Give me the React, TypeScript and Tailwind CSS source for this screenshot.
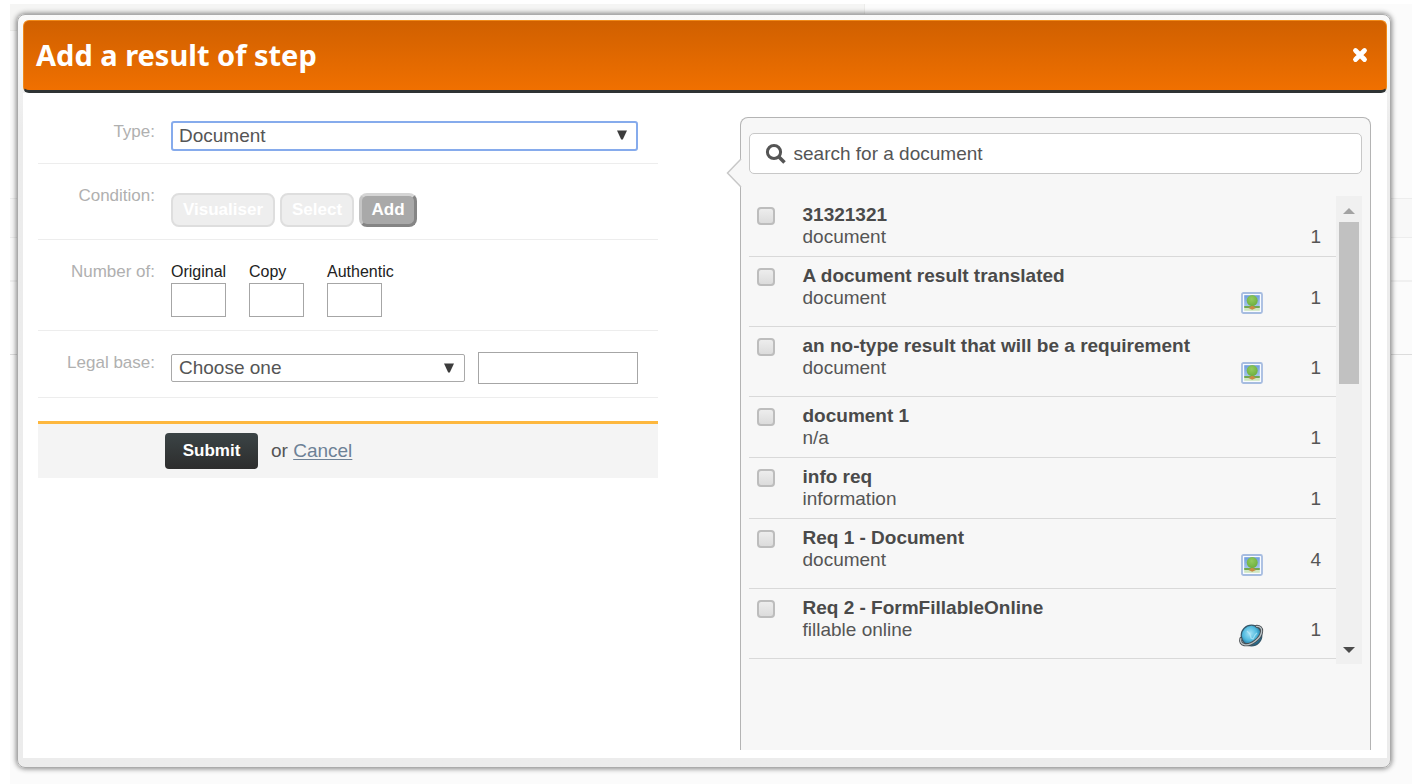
import type { ReactNode } from "react";

type Kind = "image" | "globe" | null;

interface Result {
  title: string;
  type: string;
  count: number;
  kind: Kind;
}

const results: Result[] = [
  { title: "31321321", type: "document", count: 1, kind: null },
  { title: "A document result translated", type: "document", count: 1, kind: "image" },
  { title: "an no-type result that will be a requirement", type: "document", count: 1, kind: "image" },
  { title: "document 1", type: "n/a", count: 1, kind: null },
  { title: "info req", type: "information", count: 1, kind: null },
  { title: "Req 1 - Document", type: "document", count: 4, kind: "image" },
  { title: "Req 2 - FormFillableOnline", type: "fillable online", count: 1, kind: "globe" },
];

function ImageIcon() {
  return (
    <svg width="22" height="22" viewBox="0 0 22 22" aria-hidden="true">
      <defs>
        <linearGradient id="sky" x1="0" y1="0" x2="0" y2="1">
          <stop offset="0" stopColor="#6f9ddd" />
          <stop offset="1" stopColor="#a9c8ee" />
        </linearGradient>
        <radialGradient id="leaf" cx="0.45" cy="0.35" r="0.65">
          <stop offset="0" stopColor="#93cb5f" />
          <stop offset="1" stopColor="#6db03f" />
        </radialGradient>
      </defs>
      <rect x="1" y="1" width="20" height="20" rx="1.5" fill="#f8fbff" stroke="#a6bce0" strokeWidth="1.8" />
      <rect x="3.2" y="3.2" width="15.6" height="12" fill="url(#sky)" />
      <rect x="3.2" y="14" width="15.6" height="2.2" fill="#72a850" />
      <rect x="3.2" y="16.2" width="15.6" height="2.6" fill="#cfe6bf" />
      <path d="M10 12h2.400v2.400l2.600 1.600-3.800 1.800L7.400 16l2.600-1.600z" fill="#c98a45" />
      <circle cx="11.200" cy="8.600" r="5.500" fill="url(#leaf)" />
    </svg>
  );
}

function GlobeIcon() {
  return (
    <svg width="26" height="24" viewBox="0 0 26 24" className="overflow-visible" aria-hidden="true">
      <defs>
        <radialGradient id="sphere" cx="0.42" cy="0.4" r="0.62">
          <stop offset="0" stopColor="#a3e2f6" />
          <stop offset="0.55" stopColor="#4fb9de" />
          <stop offset="1" stopColor="#155f88" />
        </radialGradient>
      </defs>
      <circle cx="12.500" cy="11.500" r="10.300" fill="url(#sphere)" stroke="#35586b" strokeWidth="1.200" />
      <path d="M8 7l3 3 1 4 2 1 2-4 2-2" fill="none" stroke="#c3edf8" strokeWidth="1.200" opacity="0.6" />
      <g transform="rotate(-38 12.500 12)" fill="none" strokeLinecap="round">
        <path d="M22.500 7.500C28 11.500 23 18.300 12.500 18.300S-3 11.500 2.500 7.500" stroke="#474c50" strokeWidth="3" />
        <path d="M22.500 7.500C28 11.500 23 18.300 12.500 18.300S-3 11.500 2.500 7.500" stroke="#b9c3c7" strokeWidth="1.300" />
      </g>
    </svg>
  );
}

function SelectBox({ id, value, className, focused }: { id: string; value: string; className: string; focused?: boolean }) {
  return (
    <div className={`relative ${className}`}>
      <select
        id={id}
        className={
          focused
            ? "block h-[30px] w-full appearance-none rounded-[3px] border-2 border-[#86abec] bg-white pl-[6px] text-[19px] leading-6 text-[#555] outline-none"
            : "block h-7 w-full appearance-none rounded-[2px] border border-[#a9a9a9] bg-white pl-[7px] text-[19px] leading-6 text-[#555] outline-none"
        }
      >
        <option>{value}</option>
      </select>
      <svg className="pointer-events-none absolute top-[9px] right-[11px]" width="10" height="10" viewBox="0 0 10 10" aria-hidden="true">
        <path d="M0 0.500h10L5.800 9.500H4.200z" fill="#3c3c3c" />
      </svg>
    </div>
  );
}

function Row({ label, htmlFor, className, children }: { label: string; htmlFor: string; className: string; children: ReactNode }) {
  return (
    <div className={`flex gap-4 border-b border-[#ededed] pr-5 ${className}`}>
      <label htmlFor={htmlFor} className="w-[117px] shrink-0 text-right text-[17px] leading-[22px] text-[#b0b0b0]">
        {label}
      </label>
      {children}
    </div>
  );
}

function CountField({ id, label }: { id: string; label: string }) {
  return (
    <div className="w-[78px]">
      <label htmlFor={id} className="block">
        {label}
      </label>
      <input id={id} type="text" className="block h-[34px] w-[55px] border border-[#a6a6a6] bg-white px-1 outline-none" />
    </div>
  );
}

function Backdrop() {
  return (
    <div className="absolute inset-0 flex flex-col bg-[#fbfbfb]" aria-hidden="true">
      <div className="h-[27px] w-[61%] border-r border-b border-[#ececea] bg-[#f5f5f4]" />
      <div className="h-[167px]" />
      <div className="h-[40px] border-y border-[#ededed] bg-[#f8f8f8]" />
      <div className="h-[44px] border-b-2 border-[#f0f0f0]" />
      <div className="h-[73px] border-b border-[#dcdcdc]" />
    </div>
  );
}

export default function App() {
  return (
    <div className="min-h-screen bg-white pt-1 pr-[2px] pl-[10px] font-['Liberation_Sans',Arial,sans-serif] text-[#555]">
      <div className="relative min-h-[780px] pt-[10px] pr-[21px] pb-4 pl-[7px]">
        <Backdrop />
        <section
          role="dialog"
          aria-labelledby="dialog-title"
          className="relative rounded-lg border border-[#ababab] bg-linear-to-b from-[#fafafa] to-[#ececec] to-15% pt-[5px] pr-[3px] pb-[9px] pl-[5px] shadow-[0_0_5px_1px_rgba(0,0,0,0.45)]"
        >
          <header className="flex h-[73px] items-center justify-between rounded-md border border-b-3 border-[#f08a1a] border-b-[#2e3334] bg-linear-to-b from-[#d06000] to-[#f07000] pr-[18px] pb-[2px] pl-3">
            <h1 id="dialog-title" className="font-['Noto_Sans','Trebuchet_MS',sans-serif] text-[29px] leading-9 font-bold text-white">
              Add a result of step
            </h1>
            <button type="button" aria-label="Close" className="flex">
              <svg width="16" height="16" viewBox="0 0 16 16" aria-hidden="true">
                <path d="M3.500 3.500l9 9M12.500 3.500l-9 9" stroke="#fff" strokeWidth="4.800" strokeLinecap="round" />
              </svg>
            </button>
          </header>

          <div className="grid grid-cols-[620fr_632fr] gap-[82px] bg-white pt-6 pr-4 pb-2 pl-[15px]">
            <form className="min-w-0 pt-1">
              <Row label="Type:" htmlFor="type" className="pb-3">
                <SelectBox id="type" value="Document" className="flex-1" focused />
              </Row>

              <Row label="Condition:" htmlFor="condition-add" className="pt-[21px] pb-3">
                <div className="mt-2 flex h-[34px] gap-[5px] text-[17px] leading-5 font-bold text-white">
                  <button type="button" disabled className="w-[104px] rounded-lg border-2 border-[#dedede] bg-[#eeeeee]">
                    Visualiser
                  </button>
                  <button type="button" disabled className="w-[74px] rounded-lg border-2 border-[#dedede] bg-[#eeeeee]">
                    Select
                  </button>
                  <button
                    type="button"
                    id="condition-add"
                    className="w-[58px] rounded-lg border-3 border-t-[#d5d5d5] border-r-[#858585] border-b-[#858585] border-l-[#c5c5c5] bg-[#a9a9a9]"
                  >
                    Add
                  </button>
                </div>
              </Row>

              <Row label="Number of:" htmlFor="original" className="pt-[21px] pb-[13px]">
                <div className="flex text-[16px] leading-[22px] text-[#222]">
                  <CountField id="original" label="Original" />
                  <CountField id="copy" label="Copy" />
                  <CountField id="authentic" label="Authentic" />
                </div>
              </Row>

              <Row label="Legal base:" htmlFor="legal-base" className="pt-[21px] pb-[13px]">
                <div className="grid min-w-0 flex-1 grid-cols-[296fr_160fr] items-center gap-[13px]">
                  <SelectBox id="legal-base" value="Choose one" className="min-w-0" />
                  <input
                    type="text"
                    aria-label="Legal base reference"
                    className="h-8 w-full min-w-0 border border-[#a6a6a6] bg-white px-2 outline-none"
                  />
                </div>
              </Row>

              <div className="mt-[23px] flex items-center border-t-3 border-[#fdb73e] bg-[#f4f4f4] py-[9px] pl-[127px] text-[19px] leading-6">
                <button
                  type="submit"
                  className="h-9 w-[93px] rounded-[4px] bg-linear-to-b from-[#3b4446] to-[#2d2d2d] text-[17px] font-bold text-white"
                >
                  Submit
                </button>
                <p className="ml-[13px]">
                  or{" "}
                  <a href="#cancel" className="text-[#6d8196] underline underline-offset-2">
                    Cancel
                  </a>
                </p>
              </div>
            </form>

            <aside className="relative min-h-[633px] min-w-0 rounded-t-lg border border-b-0 border-[#b4b4b4] bg-[#f7f7f7] px-2 pt-[15px]">
              <svg className="absolute top-10 -left-[15px]" width="18" height="30" viewBox="0 0 18 30" aria-hidden="true">
                <path d="M15 1L1.500 15 15 29h3V1z" fill="#f7f7f7" />
                <path d="M15 1L1.500 15 15 29" fill="none" stroke="#c8c8c8" strokeWidth="1.500" />
              </svg>

              <div className="flex h-[41px] items-center rounded-[5px] border border-[#c8c8c8] bg-white pl-[15px]">
                <svg width="22" height="22" viewBox="0 0 22 22" aria-hidden="true">
                  <circle cx="9" cy="9" r="6.600" fill="none" stroke="#555" strokeWidth="3" />
                  <path d="M13.500 13.500L19.500 19.500" stroke="#555" strokeWidth="3.600" />
                </svg>
                <input
                  type="text"
                  aria-label="Search for a document"
                  placeholder="search for a document"
                  className="ml-[7px] min-w-0 flex-1 bg-transparent text-[19px] leading-6 outline-none placeholder:text-[#555]"
                />
              </div>

              <div className="mt-[22px] flex h-[468px]">
                <ul className="min-w-0 flex-1 text-[19px] leading-[22px]">
                  {results.map((item, index) => (
                    <li
                      key={item.title}
                      className={
                        item.kind
                          ? "flex h-[70px] items-start border-b border-[#d9d9d9] pt-2 pr-[15px] pl-2"
                          : "flex h-[61px] items-start border-b border-[#d9d9d9] pt-2 pr-[15px] pl-2"
                      }
                    >
                      <input
                        id={`result-${index}`}
                        type="checkbox"
                        className="mt-[3px] size-[18px] shrink-0 appearance-none rounded-[4px] border-2 border-[#bdbdbd] bg-linear-to-b from-[#ededed] to-[#dcdcdc]"
                      />
                      <label htmlFor={`result-${index}`} className="ml-7 min-w-0 flex-1">
                        <span className="block font-bold text-[#4a4a4a]">{item.title}</span>
                        <span className="block">{item.type}</span>
                      </label>
                      <span className="mt-[27px] flex w-[26px] justify-center">
                        {item.kind === "image" && <ImageIcon />}
                        {item.kind === "globe" && <GlobeIcon />}
                      </span>
                      <span className="mt-[22px] w-14 text-right">{item.count}</span>
                    </li>
                  ))}
                </ul>
                <div className="flex w-[26px] flex-col items-center justify-between bg-[#f0f0f0]" aria-hidden="true">
                  <div className="flex flex-col items-center">
                    <svg width="26" height="26" viewBox="0 0 26 26">
                      <path d="M7 18l6-6 6 6z" fill="#a3a3a3" />
                    </svg>
                    <div className="h-[162px] w-5 bg-[#c1c1c1]" />
                  </div>
                  <svg width="26" height="26" viewBox="0 0 26 26">
                    <path d="M7 9h12l-6 6z" fill="#4b4b4b" />
                  </svg>
                </div>
              </div>
            </aside>
          </div>
        </section>
      </div>
    </div>
  );
}
